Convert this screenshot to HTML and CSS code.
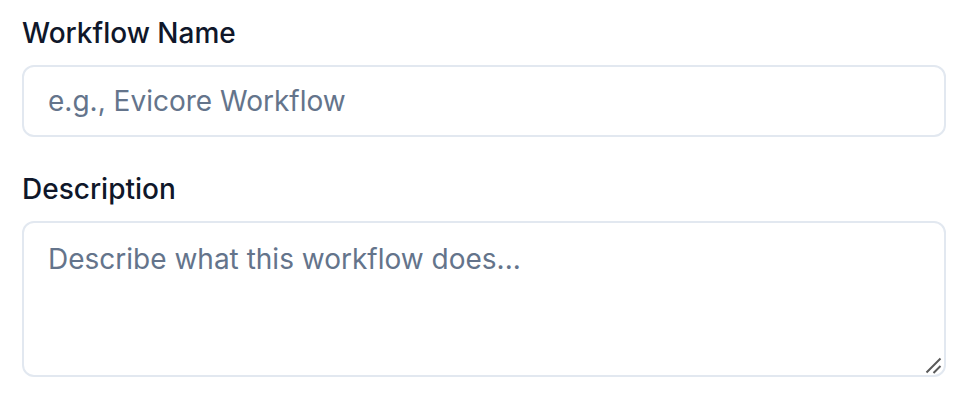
FILE: index.html
```html
<!DOCTYPE html>
<html>
<head>
<meta charset="utf-8">
<link rel="stylesheet" href="styles.css">
</head>
<body>
<form class="form">
  <div class="field">
    <label class="label" for="name">Workflow Name</label>
    <input class="input" id="name" type="text" placeholder="e.g., Evicore Workflow">
  </div>
  <div class="field">
    <label class="label" for="desc">Description</label>
    <div class="textarea-wrap">
      <textarea class="textarea" id="desc" placeholder="Describe what this workflow does..."></textarea>
      <svg class="grabber" width="20" height="20" viewBox="0 0 20 20" aria-hidden="true">
        <path d="M2.5 17.5 L16.5 3.5 M9.5 18 L16.5 11" stroke="#5a5a5a" stroke-width="2" stroke-linecap="butt" fill="none"/>
      </svg>
    </div>
  </div>
</form>
</body>
</html>
```
FILE: styles.css
```css
* { box-sizing: border-box; }
html, body { margin: 0; background: #fff; }
body { font-family: Inter, "Noto Sans", sans-serif; }
.form {
  display: flex;
  flex-direction: column;
  gap: 32px;
  padding: 13px 18px 0 22px;
}
.field {
  display: flex;
  flex-direction: column;
  gap: 12px;
}
.label {
  font-size: 28px;
  line-height: 40px;
  font-weight: 500;
  color: #0f172a;
}
.input, .textarea {
  width: 100%;
  font-family: inherit;
  font-size: 28px;
  line-height: 40px;
  color: #0f172a;
  border: 2px solid #e2e8f0;
  border-radius: 12px;
  background: #fff;
  outline: none;
  margin: 0;
}
.input {
  height: 72px;
  padding: 0 24px;
}
.textarea-wrap {
  position: relative;
}
.textarea {
  height: 156px;
  padding: 16px 24px;
  resize: none;
  display: block;
}
.grabber {
  position: absolute;
  right: 2px;
  bottom: 2px;
  pointer-events: none;
}
.input::placeholder, .textarea::placeholder { color: #64748b; opacity: 1; }
```
